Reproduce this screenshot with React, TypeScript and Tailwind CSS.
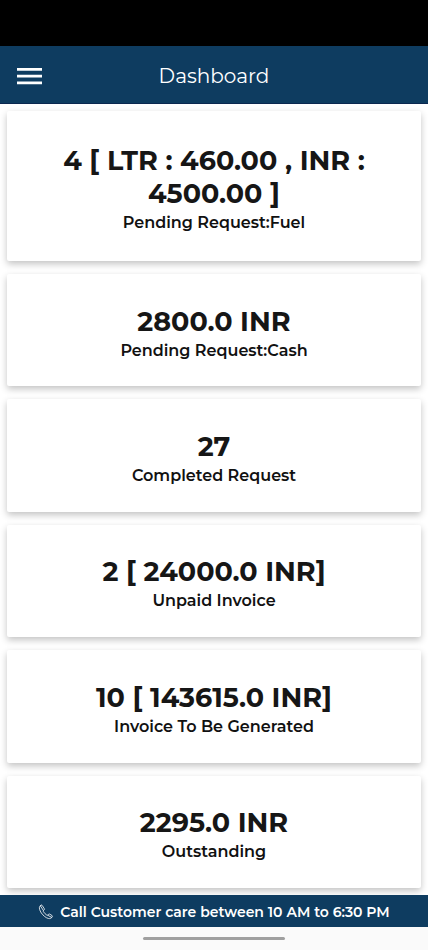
import React from 'react';

interface StatCardProps {
  value: string;
  label: string;
}

const StatCard: React.FC<StatCardProps> = ({ value, label }) => {
  return (
    <section className="flex flex-col justify-center rounded-xs bg-white px-8 pt-5 pb-3 text-center shadow-[0_3px_7px_rgba(0,0,0,0.24)]">
      <h2 className="text-[27px] leading-[33px] font-bold text-[#161616]">{value}</h2>
      <p className="text-base leading-[26px] font-semibold text-[#111111]">{label}</p>
    </section>
  );
};

const MenuIcon: React.FC = () => (
  <svg viewBox="0 0 26 18" className="h-[18px] w-[26px]" fill="currentColor" aria-hidden="true">
    <path d="M1 1h25v2.8H1zM1 7.8h25v2.8H1zM1 14.5h25v2.8H1z" />
  </svg>
);

const PhoneIcon: React.FC = () => (
  <svg
    viewBox="0 0 16 16"
    className="size-4"
    fill="none"
    stroke="currentColor"
    strokeWidth="0.8"
    strokeLinecap="round"
    strokeLinejoin="round"
    aria-hidden="true"
  >
    <path d="M2.9 1.3 1.8 2.4C.8 3.8 1.7 6.5 3.3 8.9c1.9 2.7 4.6 5 7.2 5.6 1.3.3 2.5-.1 3.2-1l.6-.8c.3-.4.2-.8-.2-1.1l-2.4-1.5c-.4-.3-.9-.2-1.2.2l-.7.8c-.3.3-.7.3-1 0C7.4 10.2 6.2 9 5.3 7.5c-.2-.4-.2-.7.1-1l.8-.7c.3-.3.4-.7.1-1.1L4.2 1.5c-.3-.5-.9-.6-1.3-.2Z" />
    <path d="m2.6 2.2 2.6 4M10 11.4l3.7 2" />
  </svg>
);

const stats = [
  { value: '4 [ LTR : 460.00 , INR : 4500.00 ]', label: 'Pending Request:Fuel' },
  { value: '2800.0 INR', label: 'Pending Request:Cash' },
  { value: '27', label: 'Completed Request' },
  { value: '2 [ 24000.0 INR]', label: 'Unpaid Invoice' },
  { value: '10 [ 143615.0 INR]', label: 'Invoice To Be Generated' },
  { value: '2295.0 INR', label: 'Outstanding' },
];

const App: React.FC = () => {
  return (
    <div className="flex min-h-screen flex-col bg-[#fafafa] font-[Montserrat,Inter,sans-serif]">
      <div className="h-[46px] bg-black" />
      <header className="grid h-[58px] grid-cols-[1fr_auto_1fr] items-center border-b border-[#0b2850] bg-[#0e3c60] px-4 pt-0.5 text-white">
        <button type="button" aria-label="Open menu" className="justify-self-start">
          <MenuIcon />
        </button>
        <h1 className="text-xl font-normal">Dashboard</h1>
      </header>

      <main className="grid flex-1 grid-rows-[4fr_repeat(5,3fr)] gap-[13px] bg-white p-[7px]">
        {stats.map((item) => (
          <StatCard key={item.label} value={item.value} label={item.label} />
        ))}
      </main>

      <footer className="bg-[#fafafa]">
        <div className="flex h-8 items-center justify-center gap-1.5 bg-[#0e3c60] px-4 pt-0.5 text-white">
          <PhoneIcon />
          <p className="text-sm font-semibold">Call Customer care between 10 AM to 6:30 PM</p>
        </div>
        <div className="flex h-[23px] items-center justify-center">
          <div className="h-[3px] w-1/3 rounded-full bg-[#a0a0a0]" />
        </div>
      </footer>
    </div>
  );
};

export default App;
